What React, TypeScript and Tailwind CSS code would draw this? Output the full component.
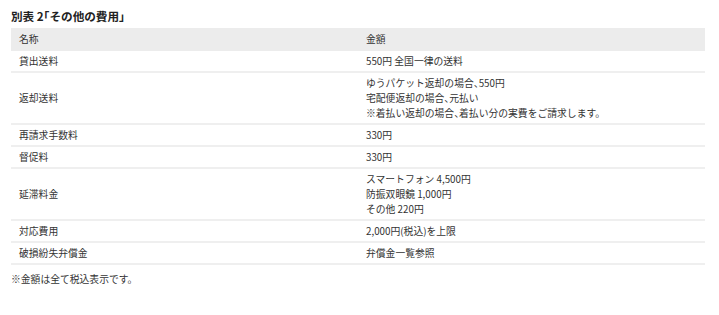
export default function App() {
  const rows: { name: string; price: string[] }[] = [
    { name: '貸出送料', price: ['550円 全国一律の送料'] },
    {
      name: '返却送料',
      price: [
        'ゆうパケット返却の場合、550円',
        '宅配便返却の場合、元払い',
        '※着払い返却の場合、着払い分の実費をご請求します。',
      ],
    },
    { name: '再請求手数料', price: ['330円'] },
    { name: '督促料', price: ['330円'] },
    { name: '延滞料金', price: ['スマートフォン 4,500円', '防振双眼鏡 1,000円', 'その他 220円'] },
    { name: '対応費用', price: ['2,000円(税込)を上限'] },
    { name: '破損紛失弁償金', price: ['弁償金一覧参照'] },
  ]
  return (
    <main
      className="min-h-[315px] bg-white px-[11px] pt-[7px] text-[#333] [font-feature-settings:'halt']"
      style={{ fontFamily: '"Noto Sans CJK JP", "Noto Sans", sans-serif' }}
    >
      <h3 className="mb-[3px] text-[11.6px] font-bold leading-[18px] text-[#222]">別表 2「その他の費用」</h3>
      <table className="w-[694px] border-collapse text-[9.8px] leading-[15px]">
        <thead>
          <tr className="bg-[#ececec]">
            <th className="w-1/2 px-2 pt-[4px] pb-[4px] text-left font-normal">名称</th>
            <th className="w-1/2 px-2 pt-[4px] pb-[4px] text-left font-normal">金額</th>
          </tr>
        </thead>
        <tbody>
          {rows.map(r => (
            <tr key={r.name} className="border-b-2 border-[#efefef]">
              <td className="px-2 pt-[3px] pb-[2px] align-middle">{r.name}</td>
              <td className="px-2 pt-[3px] pb-[2px] align-middle">
                {r.price.map(p => <div key={p}>{p}</div>)}
              </td>
            </tr>
          ))}
        </tbody>
      </table>
      <p className="mt-[7px] text-[9.8px] leading-[15px]">※金額は全て税込表示です。</p>
    </main>
  )
}
